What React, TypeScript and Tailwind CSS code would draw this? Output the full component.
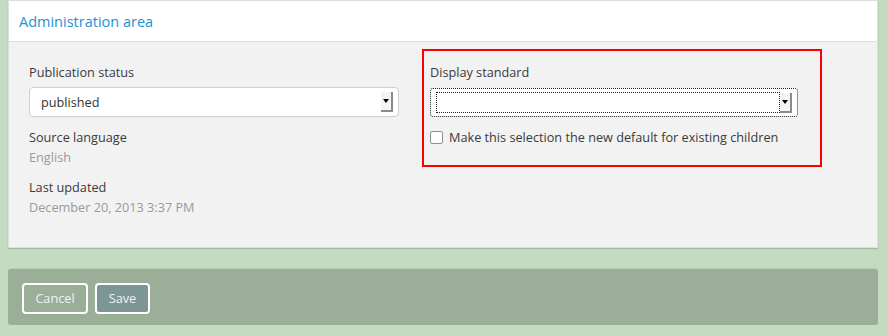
import React from "react";

function Arrow() {
  return (
    <div className="flex h-[20px] w-[12px] items-center justify-center border-r-2 border-b-2 border-[#8a8a8a] bg-[#f4f4f4]">
      <div className="h-0 w-0 border-x-[3px] border-t-[4px] border-x-transparent border-t-black" />
    </div>
  );
}

export default function App() {
  return (
    <div
      className="h-[336px] w-[888px] overflow-hidden bg-[#c3dbc0] pl-[8px] pr-[10px]"
      style={{ fontFamily: '"Open Sans", sans-serif' }}
    >
      <div className="border border-[#dedede] bg-[#f2f2f2] shadow-[0_1px_1px_rgba(0,0,0,0.15)]">
        <div className="h-[41px] border-b border-[#dedede] bg-white pl-[10px] pt-[11px] text-[14.5px] leading-[20px] text-[#1b92d4]">
          Administration area
        </div>
        <div className="flex pb-[31px] pl-[20px] pt-[21px] text-[12.7px] leading-[18px] text-[#3a3a3a]">
          <div className="w-[370px]">
            <div>Publication status</div>
            <div className="mt-[6px] flex h-[30px] items-center justify-between rounded-[4px] border border-[#cfcfcf] bg-white pl-[11px] pr-[5px] text-[#333]">
              <span>published</span>
              <Arrow />
            </div>
            <div className="mt-[11px]">Source language</div>
            <div className="mt-[2px] text-[#9a9a9a]">English</div>
            <div className="mt-[12px]">Last updated</div>
            <div className="mt-[2px] text-[#9a9a9a]">December 20, 2013 3:37 PM</div>
          </div>
          <div className="ml-[23px] -mt-[14px] h-[118px] w-[400px] border-2 border-[#ff0000] pl-[6px] pt-[12px]">
            <div>Display standard</div>
            <div className="mt-[7px] flex h-[29px] w-[368px] items-center rounded-[3px] border border-dotted border-[#222] bg-white pl-[5px] pr-[5px]">
              <div className="h-[21px] flex-1 border border-dotted border-[#222]" />
              <Arrow />
            </div>
            <div className="mt-[11px] flex items-center">
              <div className="h-[13px] w-[13px] rounded-[2px] border border-[#8f8f8f] bg-white" />
              <span className="ml-[6px]">Make this selection the new default for existing children</span>
            </div>
          </div>
        </div>
      </div>
      <div className="mt-[21px] flex h-[56px] gap-[7px] rounded-[3px] bg-[#9aae98] pl-[14px] pt-[14px] shadow-[0_-1px_0_rgba(0,0,0,0.05)]">
        <button className="h-[31px] w-[66px] rounded-[4px] border-2 border-white text-[12.7px] text-[#f2f2f2]">
          Cancel
        </button>
        <button className="h-[31px] w-[55px] rounded-[4px] border-2 border-white bg-[#7b9695] text-[12.7px] text-[#f2f2f2]">
          Save
        </button>
      </div>
    </div>
  );
}
